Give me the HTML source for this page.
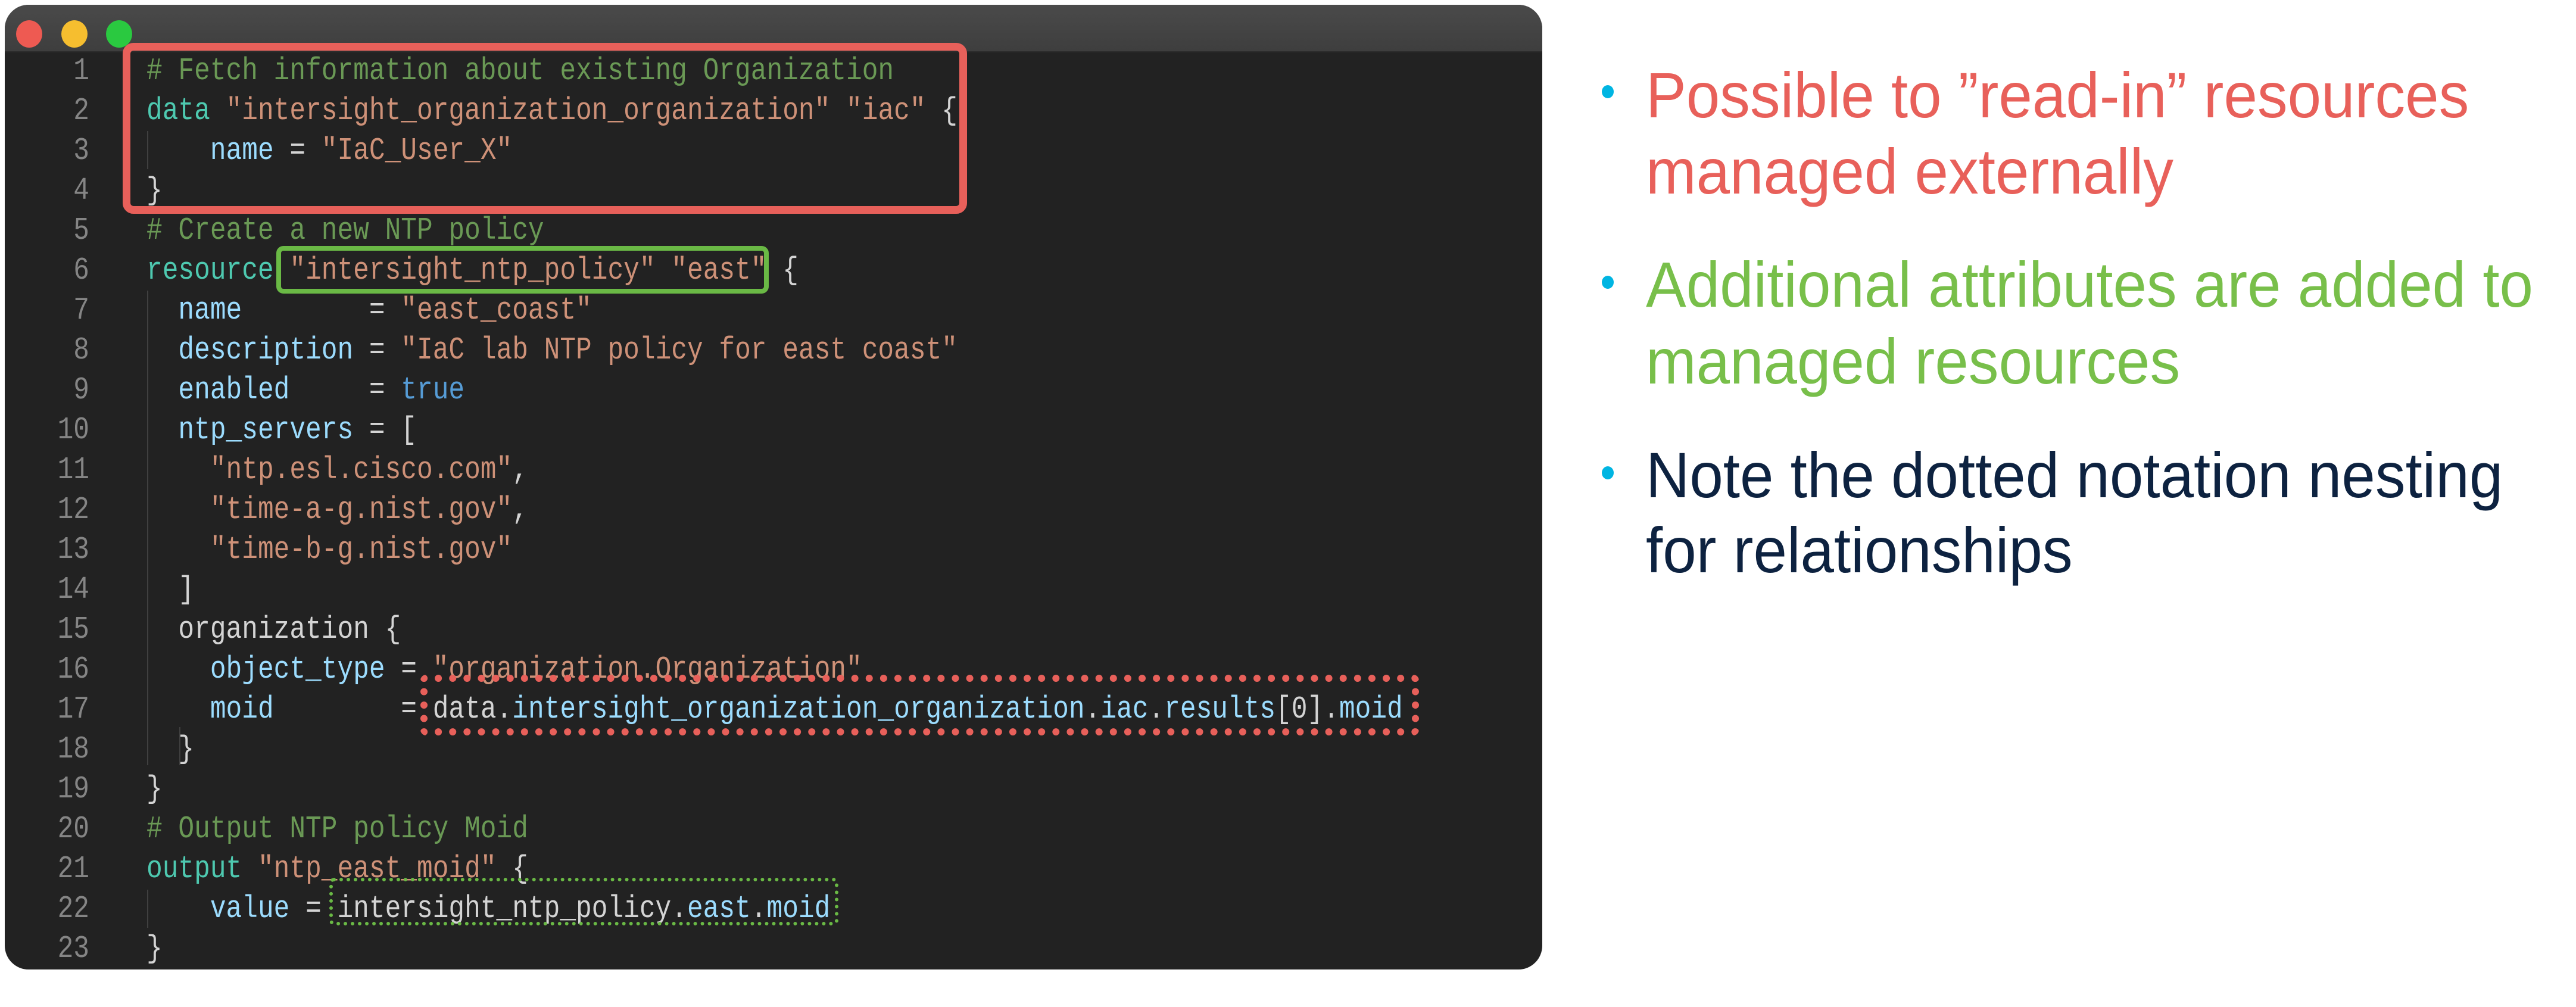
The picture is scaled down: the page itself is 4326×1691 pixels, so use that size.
<!DOCTYPE html>
<html><head><meta charset="utf-8"><style>
html,body{margin:0;padding:0;background:#fff;width:4326px;height:1691px;overflow:hidden}
.win{position:absolute;left:8px;top:8px;width:2582px;height:1620px;background:#222222;border-radius:40px;overflow:hidden}
.bar{position:absolute;left:0;top:0;width:100%;height:78px;background:linear-gradient(#4a4a4a,#3e3e3e);border-bottom:2px solid #2c2c2c}
.dot{position:absolute;top:26px;width:44px;height:46px;border-radius:50%}
.ln{position:absolute;left:60px;width:90px;text-align:right;color:#858585;font-family:"Liberation Mono",monospace;font-size:44.5px;line-height:67px;white-space:pre;transform:scaleY(1.18)}
.l{position:absolute;left:246px;color:#d4d4d4;font-family:"Liberation Mono",monospace;font-size:44.5px;line-height:67px;white-space:pre;transform:scaleY(1.18)}
.c{color:#6a9955}.k{color:#4ec9b0}.s{color:#ce9178}.a{color:#9cdcfe}.b{color:#569cd6}
.guide{position:absolute;width:2px;background:#404040}
.txt{position:absolute;left:2764px;font-family:"Liberation Sans",sans-serif;font-size:108px;white-space:nowrap;transform:scaleX(0.94);transform-origin:0 0;line-height:100px}
.bul{position:absolute;left:2690px;width:20px;height:22px;border-radius:50%;background:#00b5e2}
</style></head><body>
<div class="win">
 <div class="bar"></div>
 <div class="dot" style="left:19px;background:#ee5a52"></div>
 <div class="dot" style="left:95px;background:#f6be2f"></div>
 <div class="dot" style="left:170px;background:#2ac940"></div>
</div>
<div class="guide" style="left:247px;top:220px;height:64px"></div>
<div class="guide" style="left:247px;top:488px;height:797px"></div>
<div class="guide" style="left:301px;top:1221px;height:64px"></div>
<div class="guide" style="left:247px;top:1494px;height:64px"></div>
<div id="code"></div>
<script>
var L=[
['<span class="c"># Fetch information about existing Organization</span>'],
['<span class="k">data</span> <span class="s">"intersight_organization_organization"</span> <span class="s">"iac"</span> {'],
['    <span class="a">name</span> = <span class="s">"IaC_User_X"</span>'],
['}'],
['<span class="c"># Create a new NTP policy</span>'],
['<span class="k">resource</span> <span class="s">"intersight_ntp_policy"</span> <span class="s">"east"</span> {'],
['  <span class="a">name</span>        = <span class="s">"east_coast"</span>'],
['  <span class="a">description</span> = <span class="s">"IaC lab NTP policy for east coast"</span>'],
['  <span class="a">enabled</span>     = <span class="b">true</span>'],
['  <span class="a">ntp_servers</span> = ['],
['    <span class="s">"ntp.esl.cisco.com"</span>,'],
['    <span class="s">"time-a-g.nist.gov"</span>,'],
['    <span class="s">"time-b-g.nist.gov"</span>'],
['  ]'],
['  organization {'],
['    <span class="a">object_type</span> = <span class="s">"organization.Organization"</span>'],
['    <span class="a">moid</span>        = data.<span class="a">intersight_organization_organization</span>.<span class="a">iac</span>.<span class="a">results</span>[0].<span class="a">moid</span>'],
['  }'],
['}'],
['<span class="c"># Output NTP policy Moid</span>'],
['<span class="k">output</span> <span class="s">"ntp_east_moid"</span> {'],
['    <span class="a">value</span> = intersight_ntp_policy.<span class="a">east</span>.<span class="a">moid</span>'],
['}']];
var h='';
for(var i=0;i<L.length;i++){var t=120+i*67-33.5;
h+='<div class="ln" style="top:'+t+'px">'+(i+1)+'</div><div class="l" style="top:'+t+'px">'+L[i][0]+'</div>';}
document.getElementById('code').innerHTML=h;
</script>
<div style="position:absolute;left:206px;top:72px;width:1392px;height:261px;border:13px solid #e8605a;border-radius:18px"></div>
<div style="position:absolute;left:464px;top:413px;width:811px;height:64px;border:8px solid #6ab945;border-radius:12px"></div>
<div style="position:absolute;left:706px;top:1133px;width:1653px;height:78px;border:12px dotted #e8605a;border-radius:10px"></div>
<div style="position:absolute;left:553px;top:1474px;width:843px;height:68px;border:6px dotted #6ab945;border-radius:8px"></div>

<div class="bul" style="top:143px"></div>
<div class="txt" style="top:110px;color:#e8605a">Possible to ”read-in” resources</div>
<div class="txt" style="top:238px;color:#e8605a">managed externally</div>
<div class="bul" style="top:463px"></div>
<div class="txt" style="top:428px;color:#78bf4a">Additional attributes are added to</div>
<div class="txt" style="top:557px;color:#78bf4a">managed resources</div>
<div class="bul" style="top:783px"></div>
<div class="txt" style="top:748px;color:#0d2240">Note the dotted notation nesting</div>
<div class="txt" style="top:874px;color:#0d2240">for relationships</div>
</body></html>
